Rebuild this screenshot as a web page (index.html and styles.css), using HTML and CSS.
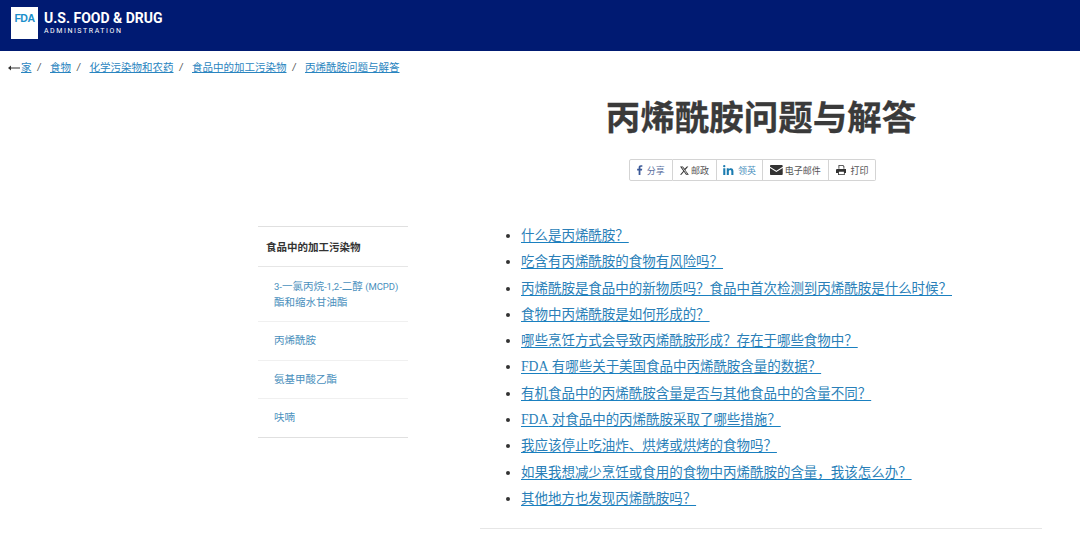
FILE: index.html
```html
<!DOCTYPE html>
<html lang="zh-CN">
<head>
<meta charset="utf-8">
<title>丙烯酰胺问题与解答</title>
<link rel="stylesheet" href="styles.css">
</head>
<body>
<header class="site-header">
  <div class="logo-box">FDA</div>
  <div class="logo-text">
    <div class="logo-main">U.S. FOOD &amp; DRUG</div>
    <div class="logo-sub">ADMINISTRATION</div>
  </div>
</header>
<nav class="crumbs">
  <svg class="arrow" viewBox="0 0 12 6"><path d="M0 3l3-2.500V2.500h9v1H3v2z"/></svg><a href="#">家</a><span class="sep">/</span><a href="#">食物</a><span class="sep">/</span><a href="#">化学污染物和农药</a><span class="sep">/</span><a href="#">食品中的加工污染物</a><span class="sep">/</span><a href="#">丙烯酰胺问题与解答</a>
</nav>
<div class="layout">
  <aside class="side">
    <div class="side-head">食品中的加工污染物</div>
    <a class="side-item side-item-tall" href="#"><span class="side-latin">3-</span>一氯丙烷<span class="side-latin">-1,2-</span>二醇<span class="side-latin"> (MCPD)</span><br>酯和缩水甘油酯</a>
    <a class="side-item" href="#">丙烯酰胺</a>
    <a class="side-item" href="#">氨基甲酸乙酯</a>
    <a class="side-item" href="#">呋喃</a>
  </aside>
  <main class="main">
    <h1 class="title">丙烯酰胺问题与解答</h1>
    <div class="share">
      <a class="share-btn fb" href="#"><svg class="ico" viewBox="0 0 8 14"><path d="M2.300 14V7.800H.2V5.300h2.100V3.500C2.300 1.300 3.600.2 5.500.2c.9 0 1.700.1 2 .1v2.300H6.100c-1.100 0-1.300.5-1.300 1.200v1.500h2.500l-.3 2.500H4.800V14z"/></svg>分享</a>
      <a class="share-btn x" href="#"><svg class="ico" viewBox="0 0 12 12"><path d="M0 .5h3.800l2.400 3.300L9.200.5h1.900L7 5.200l4.800 6.300H8L5.200 7.700 1.900 11.500H0l4.400-5zM2.300 1.600l6.300 8.800h1L3.300 1.600z"/></svg>邮政</a>
      <a class="share-btn in" href="#"><svg class="ico" viewBox="0 0 13 12"><path d="M.3 4h2.500v8H.3zM1.500 0a1.400 1.400 0 1 1 0 2.800 1.400 1.400 0 0 1 0-2.800zM4.500 4h2.400v1.100C7.300 4.400 8.200 3.800 9.400 3.800c2.500 0 3.100 1.600 3.100 3.800V12H10V8c0-1-.1-2.100-1.400-2.100S7 6.900 7 8v4H4.500z"/></svg>领英</a>
      <a class="share-btn mail" href="#"><svg class="ico" viewBox="0 0 14 11"><path d="M0 1.200C0 .5.500 0 1.200 0h11.600c.7 0 1.200.5 1.200 1.200v.6L7 6.300 0 1.800zM0 3.300l7 4.500 7-4.500v6.500c0 .7-.5 1.200-1.200 1.200H1.200C.5 11 0 10.500 0 9.800z"/></svg>电子邮件</a>
      <a class="share-btn print" href="#"><svg class="ico" viewBox="0 0 13 12"><path d="M3 0h5.500L10 1.500V4.500H9V2.200L8 1H4v3.500H3zM1.500 4.800h10c.8 0 1.500.7 1.500 1.500v3.200h-2.500V12h-8V9.500H0V6.300c0-.8.7-1.500 1.500-1.500zM3.500 8.200V11h6V8.200z"/></svg>打印</a>
    </div>
    <ul class="toc">
      <li><a href="#">什么是丙烯酰胺？</a></li>
      <li><a href="#">吃含有丙烯酰胺的食物有风险吗？</a></li>
      <li><a href="#">丙烯酰胺是食品中的新物质吗？食品中首次检测到丙烯酰胺是什么时候？</a></li>
      <li><a href="#">食物中丙烯酰胺是如何形成的？</a></li>
      <li><a href="#">哪些烹饪方式会导致丙烯酰胺形成？存在于哪些食物中？</a></li>
      <li><a href="#"><span class="latin">FDA</span> 有哪些关于美国食品中丙烯酰胺含量的数据？</a></li>
      <li><a href="#">有机食品中的丙烯酰胺含量是否与其他食品中的含量不同？</a></li>
      <li><a href="#"><span class="latin">FDA</span> 对食品中的丙烯酰胺采取了哪些措施？</a></li>
      <li><a href="#">我应该停止吃油炸、烘烤或烘烤的食物吗？</a></li>
      <li><a href="#">如果我想减少烹饪或食用的食物中丙烯酰胺的含量，我该怎么办？</a></li>
      <li><a href="#">其他地方也发现丙烯酰胺吗？</a></li>
    </ul>
    <hr class="rule">
  </main>
</div>
</body>
</html>
```
FILE: styles.css
```css
* { box-sizing: border-box; }
html, body { margin: 0; height: 540px; overflow: hidden; background: #fff; }
body { font-family: "Liberation Sans", "Noto Sans CJK SC", sans-serif; color: #333; }
a { color: #2a85c0; }

.site-header { height: 51px; background: #001a72; display: flex; align-items: flex-start; padding: 7px 0 0 11px; gap: 6px; color: #fff; }
.logo-box { width: 27px; height: 31.500px; background: #fff; color: #1a8fcb; font: bold 10.500px/23px "Liberation Sans", sans-serif; letter-spacing: -.5px; text-align: center; }
.logo-text { font-family: "Roboto", sans-serif; }
.logo-main { font-size: 14px; font-weight: 700; line-height: 14px; margin-top: 3.500px; white-space: nowrap; }
.logo-sub { font-size: 7px; font-weight: 400; line-height: 8px; margin-top: 2px; letter-spacing: 1.55px; white-space: nowrap; }

.crumbs { height: 30px; padding: 8px 0 0 8px; font-size: 10.500px; line-height: 16px; color: #555; white-space: nowrap; }
.crumbs a { color: #2a85c0; }
.arrow { display: inline-block; width: 12px; height: 6px; margin-right: 1px; fill: #333; }
.sep { display: inline-block; width: 18.500px; padding-left: 6px; font-family: "Liberation Sans", sans-serif; font-style: italic; }

.layout { display: grid; grid-template-columns: 150px 562px; column-gap: 72px; padding-left: 258px; }
.side { margin-top: 145px; border-top: 1px solid #e0e0e0; font-size: 10.500px; }
.side-head { height: 40px; line-height: 41px; padding-left: 8px; font-weight: 700; font-size: 10.500px; color: #333; border-bottom: 1px solid #e6e6e6; }
.side-item { display: block; padding: 11px 8px 11px 16px; line-height: 15.500px; color: #4a90bd; text-decoration: none; border-bottom: 1px solid #f0f0f0; font-family: "Roboto", "Noto Sans CJK SC", sans-serif; white-space: nowrap; }
.side-latin { font-size: 9.500px; }
.side-item-tall { padding: 12px 8px 11px 16px; }
.side-item:last-child { border-bottom: 1px solid #e0e0e0; }

.main { min-width: 0; }
.title { margin: 15px 0 0; font-size: 34.500px; line-height: 44px; font-weight: 700; text-align: center; color: #3a3a3a; white-space: nowrap; -webkit-text-stroke: .3px #3a3a3a; }
.share { display: flex; justify-content: center; margin-top: 19px; height: 22px; padding-right: 17px; }
.share-btn { flex: none; display: flex; align-items: center; justify-content: center; gap: 2px; padding: 0; font-size: 9px; color: #555; text-decoration: none; border: 1px solid #d4d4d4; border-left: 0; white-space: nowrap; }
.share-btn:first-child { border-left: 1px solid #d4d4d4; border-radius: 2px 0 0 2px; }
.share-btn:last-child { border-radius: 0 2px 2px 0; }
.ico { height: 10px; width: auto; fill: #333; display: block; }
.fb { width: 44px; gap: 4px; color: #5a6f9e; } .fb .ico { fill: #3b5998; }
.x { width: 44px; } .x .ico { height: 9px; }
.in { width: 46px; color: #4a90bd; gap: 4px; } .in .ico { fill: #1a7bb0; }
.mail { width: 66px; }
.print { width: 47px; gap: 4px; }

.toc { margin: 42px 0 0; padding: 0 0 0 41px; font-family: "Liberation Serif", "Noto Sans CJK SC", serif; font-size: 13.470px; line-height: 26.300px; }
.toc a { color: #2a7fb8; text-decoration-color: #1a80c0; text-decoration-thickness: 1px; text-underline-offset: 2px; }
.latin { font-size: 13.700px; line-height: 0; }
.rule { margin: 16px 0 0; border: 0; border-top: 1px solid #e6e6e6; }
```
